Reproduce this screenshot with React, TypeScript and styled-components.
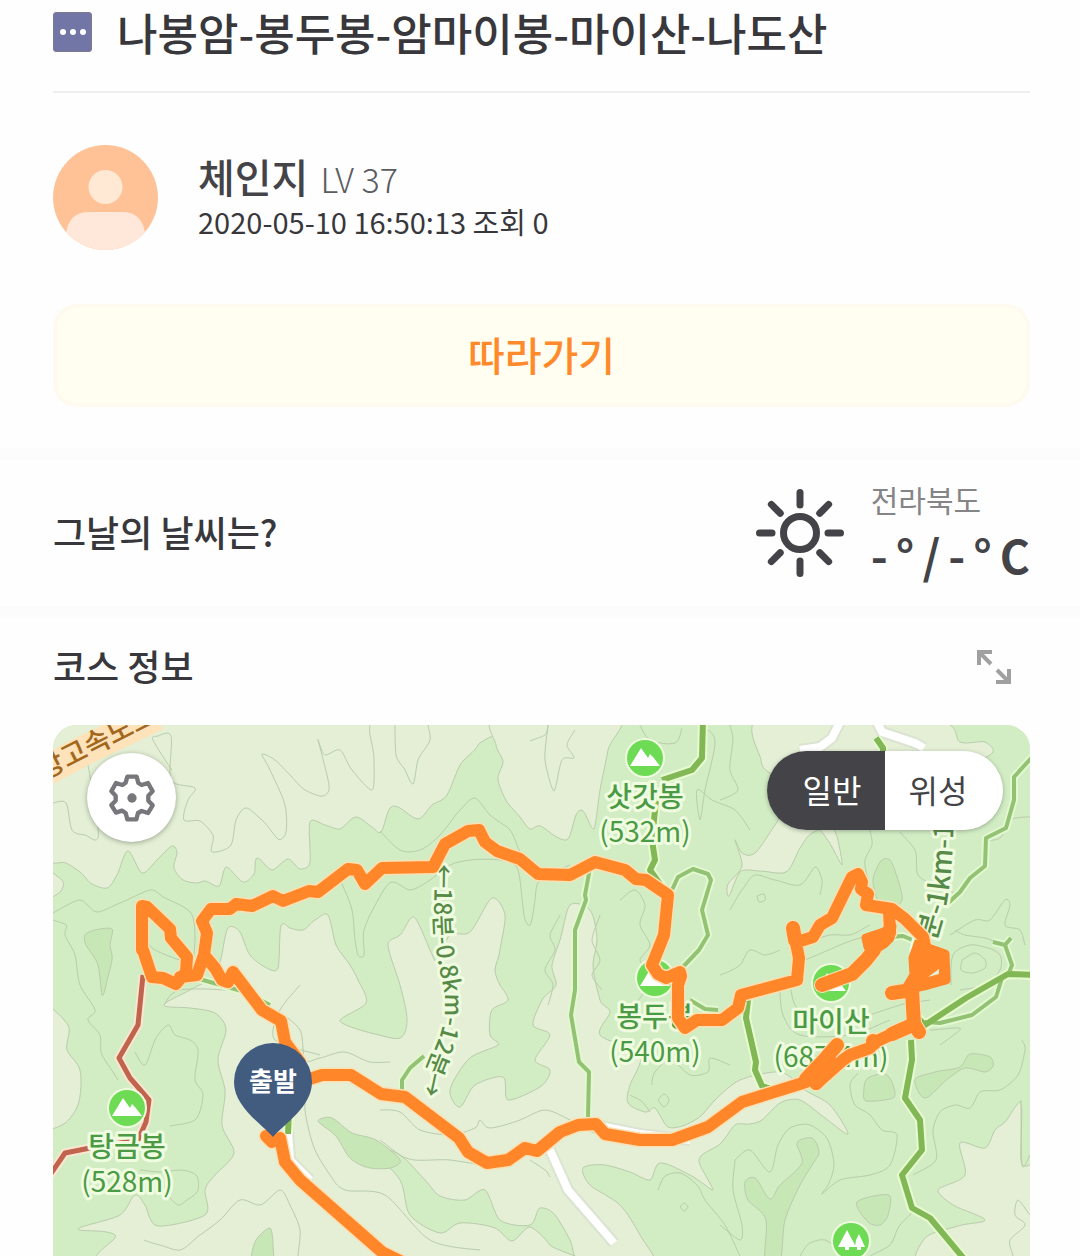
import React, { useState } from "react";
import styled, { createGlobalStyle } from "styled-components";

const GlobalStyle = createGlobalStyle`
  *, *::before, *::after { box-sizing: border-box; }
  body {
    margin: 0;
    background: #fefefe;
    color: #38383c;
    font-family: "Noto Sans CJK KR", "Noto Sans", sans-serif;
  }
  button { font: inherit; border: 0; padding: 0; cursor: pointer; }
  h1, h2, p { margin: 0; }
`;

const Page = styled.main`
  overflow: hidden;
`;

const Section = styled.section`
  padding: 0 50px 0 53px;
`;

const Band = styled.hr`
  height: 12px;
  margin: 0;
  border: 0;
  background: #fcfcfc;
`;

const PostHeader = styled.header`
  display: flex;
  align-items: center;
  gap: 25px;
  padding-bottom: 27px;
  border-bottom: 2px solid #efefef;
`;

const CategoryBadge = styled.span`
  display: flex;
  align-items: center;
  justify-content: center;
  gap: 4px;
  flex: none;
  width: 39px;
  height: 40px;
  border: 1px solid #7b7a90;
  border-radius: 3px;
  background: #7276a6;
`;

const BadgeDot = styled.i`
  width: 6px;
  height: 6px;
  border-radius: 50%;
  background: #fff;
`;

const Title = styled.h1`
  font-size: 44px;
  line-height: 64px;
  font-weight: 500;
`;

const Profile = styled.div`
  display: flex;
  align-items: center;
  gap: 40px;
  padding: 52px 0 54px;
`;

const Avatar = styled.svg`
  flex: none;
  width: 105px;
  height: 105px;
`;

const NameLine = styled.p`
  display: flex;
  align-items: baseline;
  gap: 12px;
  line-height: 48px;
`;

const UserName = styled.strong`
  font-size: 40px;
  font-weight: 500;
  color: #444448;
`;

const Level = styled.span`
  font-size: 34px;
  font-weight: 300;
  color: #5c5c60;
`;

const Meta = styled.p`
  padding-bottom: 4px;
  font-size: 29px;
  line-height: 36px;
`;

const FollowButton = styled.button`
  display: block;
  width: 100%;
  height: 103px;
  margin-bottom: 41px;
  padding-bottom: 4px;
  border: 4px solid #fffaef;
  border-radius: 24px;
  background: #fffef1;
  color: #ff8a2b;
  font-size: 40px;
  font-weight: 500;
`;

const WeatherRow = styled.div`
  display: flex;
  align-items: center;
  justify-content: space-between;
  height: 145px;
`;

const SectionTitle = styled.h2`
  padding-bottom: 4px;
  font-size: 36px;
  line-height: 52px;
  font-weight: 500;
`;

const Weather = styled.div`
  display: flex;
  align-items: center;
  gap: 26px;
`;

const SunIcon = styled.svg`
  width: 90px;
  height: 90px;
`;

const WeatherText = styled.div`
  padding-bottom: 8px;
`;

const Region = styled.p`
  font-size: 30px;
  line-height: 50px;
  color: #858588;
`;

const Temperature = styled.p`
  display: flex;
  gap: 8px;
  font-size: 46px;
  line-height: 60px;
  font-weight: 700;
  color: #444448;
  white-space: nowrap;
`;

const CourseHeader = styled.div`
  display: flex;
  align-items: center;
  justify-content: space-between;
  height: 100px;
  margin-bottom: 8px;
  padding-right: 16px;
`;

const ExpandButton = styled.button`
  display: flex;
  background: none;
  color: #a0a0a0;
`;

const MapFrame = styled.div`
  position: relative;
  overflow: hidden;
  aspect-ratio: 977 / 531;
  border-radius: 24px 24px 0 0;
  background: #d2ecc4;
`;

const MapDrawing = styled.svg`
  display: block;
  width: 100%;
  height: 100%;
  font-family: "Noto Sans CJK KR", "Noto Sans", sans-serif;
`;

const SettingsButton = styled.button`
  position: absolute;
  top: 28px;
  left: 34px;
  display: flex;
  align-items: center;
  justify-content: center;
  width: 89px;
  height: 89px;
  border-radius: 50%;
  background: #fff;
  box-shadow: 0 1px 5px rgba(60, 70, 60, 0.45);
`;

const MapToggle = styled.div`
  position: absolute;
  top: 26px;
  right: 27px;
  display: flex;
  overflow: hidden;
  border-radius: 40px;
  box-shadow: 0 1px 4px rgba(60, 70, 60, 0.4);
`;

const ToggleButton = styled.button<{ $active: boolean; $side: "left" | "right" }>`
  width: 118px;
  height: 79px;
  padding: ${(p) => (p.$side === "left" ? "0 0 4px 12px" : "0 12px 4px 0")};
  background: ${(p) => (p.$active ? "#444448" : "#fff")};
  color: ${(p) => (p.$active ? "#fff" : "#444448")};
  font-size: 32px;
`;

type Pt = [number, number];

const parse = (s: string): Pt[] =>
  s.trim().split(/\s+/).map((p) => p.split(",").map(Number) as Pt);

/* Catmull-Rom curve through the points, so that contour lines look surveyed. */
const curve = (s: string, closed = false) => {
  const p = parse(s);
  const n = p.length;
  const at = (i: number) => (closed ? p[(i + n) % n] : p[Math.max(0, Math.min(n - 1, i))]);
  let d = `M${p[0]}`;
  for (let i = 0; i < (closed ? n : n - 1); i++) {
    const [a, b, c, e] = [at(i - 1), at(i), at(i + 1), at(i + 2)];
    const c1 = [b[0] + (c[0] - a[0]) / 7, b[1] + (c[1] - a[1]) / 7].map(Math.round);
    const c2 = [c[0] - (e[0] - b[0]) / 7, c[1] - (e[1] - b[1]) / 7].map(Math.round);
    d += `C${c1} ${c2} ${c}`;
  }
  return closed ? d + "Z" : d;
};

const lowland = [
  "40,715 40,850 66,863 80,872 92,884 107,888 117,875 128,851 142,873 157,860 172,846 177,853 174,868 183,880 197,883 205,881 219,886 226,867 243,882 254,874 257,858 272,870 288,859 300,869 310,862 310,822 325,825 340,829 356,817 372,827 381,832 390,808 400,808 418,819 432,805 447,795 460,765 478,745 481,715",
  "497,715 496,745 503,762 498,780 507,802 520,817 530,829 540,826 555,836 568,839 576,815 583,811 594,829 600,790 608,750 617,715",
  "764,715 761,760 770,773 800,785 860,790 930,780 990,755 985,742 960,742 935,720",
  "735,840 742,853 755,853 775,825 790,805 815,825 829,842 842,865 839,845 832,828 812,833 800,848 786,872 760,871 740,872 729,896 728,884 742,866",
  "164,1005 190,990 215,975 221,958 228,928 240,932 250,955 265,967 278,968 281,926 290,928 303,930 315,920 328,915 336,945 350,965 358,980 366,1003 340,1021 375,1034 400,1038 407,1020 400,985 388,945 400,935 414,917 430,950 438,962 450,935 470,932 492,898 505,915 500,950 495,970 500,985 508,1000 492,1010 490,1035 498,1045 470,1058 450,1090 460,1107 475,1085 503,1077 508,1100 540,1087 550,1070 535,1060 550,1035 533,1025 542,1000 556,985 552,965 560,940 570,905 590,910 597,940 593,965 600,1000 610,1012 600,1035 640,1055 630,1085 628,1103 645,1112 655,1108 668,1127 685,1125 702,1115 715,1100 740,1080 780,1072 805,1090 830,1105 848,1134 825,1118 800,1100 780,1103 762,1120 750,1124 735,1125 720,1144 702,1155 700,1165 713,1190 690,1175 660,1163 650,1180 630,1172 605,1165 583,1168 590,1185 620,1205 640,1235 655,1270 585,1270 570,1240 555,1215 540,1208 530,1225 500,1220 485,1190 465,1200 440,1196 425,1180 400,1155 370,1145 400,1180 410,1215 440,1233 460,1223 495,1228 512,1241 530,1227 550,1245 560,1270 125,1270 115,1235 78,1229 120,1215 135,1195 145,1205 158,1226 205,1215 205,1190 215,1175 234,1153 222,1125 225,1090 218,1060 226,1030 215,1013 190,1008",
  "40,1010 68,1025 67,1050 80,1070 78,1105 62,1125 40,1120",
  "1021,1103 1005,1122 995,1130 985,1148 960,1143 965,1175 938,1190 955,1206 985,1220 958,1226 925,1238 923,1270 1045,1270 1045,1150 1030,1165 1021,1160",
  "40,868 62,880 60,892 40,900",
];

const highland = [
  "85,935 95,930 112,929 110,945 112,960 106,985 102,995 98,965 86,945",
  "873,880 880,862 890,860 898,880 902,900 893,907 878,900",
  "864,1088 868,1078 885,1074 893,1085 893,1098 866,1101",
  "318,1121 332,1118 352,1133 376,1140 400,1160 390,1168 370,1168 350,1158 335,1135",
  "915,1080 935,1072 960,1067 970,1054 990,1057 993,1066 985,1072 965,1068 950,1077 925,1098",
  "745,1182 755,1178 770,1199 780,1185 802,1163 797,1143 812,1138 819,1152 812,1165 800,1185 785,1220 780,1262 765,1262 766,1220 748,1200",
  "857,1202 889,1195 888,1215 880,1225 868,1222",
  "252,1262 256,1240 270,1228 273,1245 272,1262",
];

const contours = [
  "53,803 66,803 72,830 85,835 96,840 98,827 88,765 82,750",
  "172,770 153,740 158,736 171,736 171,780 195,788 188,800 184,820 200,821 213,835 212,852 231,845 236,820 246,808 262,820 278,839 286,832 285,805 270,770 262,754 275,760 290,775 305,790 323,796 329,785 318,740 325,755 340,750 352,770 372,790 374,760 370,735 370,725",
  "53,913 80,900 97,912 120,903 150,890 165,898 191,913 195,940 193,965",
  "53,920 66,925 65,935 75,955 80,985 95,1010 88,1020 100,1035 102,1055 118,1080",
  "146,940 155,950 180,960",
  "164,1005 180,990 240,992 275,1010 300,1030 305,1060 320,1058 345,1052 370,1062 390,1062",
  "380,831 400,850 420,850 440,835 460,810 475,798 490,815 510,830 520,852 530,870",
  "340,880 352,910 355,940 358,955 364,955 364,930 378,900 392,882 410,890 430,880 450,865 470,860 500,860 515,865 520,880 524,915 530,925 535,900 540,880 570,865",
  "395,725 396,755 405,770 413,784 418,760 430,740 428,725",
  "530,741 545,735 548,725 545,760 554,791 562,760 574,758 567,745 575,730",
  "620,900 635,890 645,905 640,925 650,945 640,960 650,975 642,995 630,1010",
  "700,725 715,740 705,790 700,820 697,790 712,800 735,810 750,830",
  "730,725 733,740 730,770 738,790 720,800",
  "640,725 650,740 675,743 682,728",
  "870,830 872,845 865,860 868,880 870,895",
  "900,832 915,850 918,875 935,885 960,895",
  "1030,817 1010,820 1000,838 985,840",
  "950,935 975,920 990,920 1005,900 1010,905 1005,925 1020,930 1025,945",
  "955,930 965,935 985,938 1000,945 1010,960",
  "962,960 975,953 985,960 985,968 972,973 961,970 962,960",
  "951,985 953,955 970,945 988,948 1000,955 1000,970 985,985 960,990",
  "757,896 764,894 765,900 759,902 757,896",
  "720,975 740,965 750,950 765,955 780,950",
  "730,910 742,890 755,875 775,880 800,885 815,867 822,880 820,895",
  "800,945 830,935 850,935 870,925",
  "805,960 840,945 870,935",
  "790,985 795,1005 810,1020 830,1025 860,1018 900,1005 930,1000",
  "780,985 783,1015 800,1035 850,1035 890,1020",
  "560,915 550,935 555,950 545,970 553,985 548,1005",
  "600,915 592,940 600,960 592,975 602,990",
  "630,1095 640,1100 650,1112",
  "658,1100 664,1094 669,1100 664,1107 658,1100",
  "652,1085 655,1072 670,1060 690,1075 708,1072 710,1058 730,1065",
  "380,1110 400,1112 420,1130 450,1135 475,1128 480,1120 490,1128 520,1120 545,1110 570,1120 600,1135 660,1145",
  "380,1140 400,1155 415,1160 450,1160 480,1165",
  "530,1160 545,1170 550,1177",
  "658,1190 665,1176 680,1173 697,1185 705,1200 725,1225 740,1256",
  "680,1207 684,1203 688,1207 684,1211 680,1207",
  "295,1060 307,1080 305,1110 315,1150 330,1175 345,1190 385,1195 430,1240 480,1250",
  "140,1170 160,1172 180,1170 196,1175 198,1190 187,1200 178,1205 168,1195 165,1185",
  "144,1240 160,1245 180,1250 200,1235 220,1220 240,1200 260,1205 280,1190 290,1205 300,1230 298,1256",
  "135,1052 145,1065 155,1040 168,1025 175,1035 190,1040 198,1050 195,1080 203,1095 195,1120 170,1126",
  "300,985 280,1010 275,1040 320,1055",
  "940,1045 960,1030 955,1028 930,1030",
  "735,1160 750,1150 770,1172 778,1145 790,1128 810,1125 828,1140 834,1165 828,1185 822,1194 840,1180 870,1175 890,1165 897,1135 882,1130 870,1115 855,1105 850,1085 858,1073",
  "913,1175 936,1160 933,1130 940,1112 955,1105 970,1108 980,1092 1000,1090 1018,1075 1025,1050 1022,1040",
  "720,1225 740,1240 742,1225 733,1190 735,1160",
  "870,1256 890,1245 900,1225 915,1210",
  "1021,1100 1022,1165 1030,1155",
  "1030,1215 1018,1200 1015,1215 1025,1225 1010,1240 1013,1256",
  "800,1256 810,1243 825,1240 840,1250",
];

type RoadKind = "trail" | "path" | "fire" | "street";
const roadStyle: Record<RoadKind, { color: string; width: number; casing: string }> = {
  trail: { color: "#82b756", width: 6, casing: "#e8fbd0" },
  path: { color: "#93c274", width: 4, casing: "#e2f8cf" },
  fire: { color: "#c1644e", width: 5, casing: "#fbe6d0" },
  street: { color: "#ffffff", width: 8, casing: "#dbe4d2" },
};

const roads: [RoadKind, string][] = [
  ["street", "800,750 820,747 832,738 842,718"],
  ["street", "875,718 882,732 915,743 924,748"],
  ["street", "288,1130 290,1160 310,1180"],
  ["street", "550,1150 568,1190 614,1243"],
  ["street", "595,1125 640,1134 690,1140"],
  ["path", "590,868 585,895 586,900 575,930 575,990 571,1015 579,1062 589,1072 588,1118"],
  ["path", "402,1095 402,1080 410,1068 424,1056"],
  ["path", "672,890 678,877 693,869 708,874 711,880 702,910 708,935 699,950 680,970"],
  ["trail", "703,718 702,758 692,770 662,780"],
  ["trail", "657,790 652,840 655,860 650,870 668,895"],
  ["path", "690,1000 705,1009 718,1010"],
  ["trail", "748,1000 746,1018 756,1062 755,1070 762,1086 775,1090"],
  ["path", "1034,755 1014,777 1014,800 1006,828 986,838 985,866 970,878 960,892 945,906"],
  ["path", "890,937 903,936 922,944"],
  ["path", "993,942 1005,945 1012,965 1009,973 1034,975"],
  ["path", "1005,945 1011,938"],
  ["path", "1002,978 996,997 972,1015 940,1023 925,1022"],
  ["trail", "1034,975 1008,974 966,998 925,1025 918,1018"],
  ["trail", "911,1040 912,1060 905,1098 920,1120 922,1150 902,1175 912,1208 930,1218 965,1260"],
  ["trail", "876,738 883,748 883,760"],
  ["fire", "143,975 138,1025 119,1058 130,1078 149,1100 146,1122 138,1140 90,1148 65,1153 48,1178"],
  ["path", "196,978 245,992 270,1005"],
  ["trail", "289,1110 288,1134"],
];

const toPath = (parts: string[]) =>
  parts.map((s) => `M${s.trim().split(/\s+/).join("L")}`).join("");

const track = toPath([
  "142,950 142,906 147,907 170,929 171,938 187,957 186,972 176,984 163,978 152,977 143,950",
  "180,977 197,975 204,955 207,933 202,921 211,909 230,909 236,904 252,906 273,896 283,901 309,891 318,892 348,869 357,870 365,884 382,868 433,867 445,844 468,831 479,830 485,842 497,851 520,859 538,874 570,875 595,862 625,870 636,879 646,880 668,895 664,935 652,965 658,974 666,978 680,972 681,976 678,985 678,1018 685,1028 697,1020 722,1020 738,1008 741,995 797,980 799,958 795,938",
  "797,942 813,937 820,925 832,918 852,877 858,874 862,882 861,889 868,894 866,905 892,909 905,919 923,937 926,950",
  "889,911 890,933",
  "890,1035 875,1042 870,1048 850,1055 843,1060 816,1084",
  "806,1082 742,1102 708,1127 672,1140 640,1140 605,1134 596,1124 578,1125 560,1132 537,1151 525,1148 508,1160 487,1163 468,1152 459,1138 405,1097 381,1094 351,1075 322,1075 300,1082",
  "204,955 215,968 222,980 228,982 233,972 262,1010 281,1021 285,1042 300,1062",
  "266,1136 272,1142 280,1138 285,1162 300,1180 382,1252 410,1266",
]);

/* Stretches that were walked back and forth: the recorded line is wider there. */
const repeatedTrack = toPath([
  "793,928 795,940",
  "874,950 866,960 852,974 838,979 822,985",
  "837,1045 824,1060 806,1079",
  "833,1064 816,1083",
  "892,993 905,991 912,988 913,1008 914,1024 919,1032",
  "910,1026 892,1034",
  "873,1041 874,1043",
]);

const denseTrack = [
  "866,938 884,932 892,926 890,938 884,944 876,949 868,947",
  "918,944 928,948 945,954 946,980 928,985 905,990 914,975 913,958",
];

const LabelText = styled.text`
  fill: #4b9a45;
  stroke: #effce0;
  stroke-width: 6px;
  stroke-linejoin: round;
  paint-order: stroke;
  font-size: 28px;
  text-anchor: middle;
`;

const TrailText = styled.text`
  fill: #578a48;
  stroke: #effce0;
  stroke-width: 6px;
  stroke-linejoin: round;
  paint-order: stroke;
  font-size: ${(p: { $size: number }) => p.$size}px;
  font-weight: 500;
`;

const HighwayText = styled.text`
  fill: #a2671c;
  font-size: 28px;
  font-weight: 500;
`;

const PinText = styled.text`
  fill: #fff;
  font-size: 26px;
  font-weight: 700;
  text-anchor: middle;
`;

function Peak({ x, y, name, height }: { x: number; y: number; name: string; height: string }) {
  return (
    <g>
      <circle cx={x} cy={y} r="20" fill="#effce0" />
      <circle cx={x} cy={y} r="18" fill="#6ddb53" />
      <path
        d={`M${x - 15} ${y + 8}L${x - 4} ${y - 10}L${x + 3} ${y}L${x + 5} ${y - 4}L${x + 8} ${y - 1}L${x + 15} ${y + 8}Z`}
        fill="#fff"
      />
      <LabelText fontWeight="500">
        <tspan x={x} y={y + 49}>{name}</tspan>
        <tspan x={x} y={y + 84} fontWeight="400">{height}</tspan>
      </LabelText>
    </g>
  );
}

function CourseMap() {
  return (
    <MapDrawing viewBox="53 725 977 531" preserveAspectRatio="xMidYMid slice" role="img" aria-label="코스 지도">
      <rect x="53" y="725" width="977" height="531" fill="#d2ecc4" />
      <g stroke="#b9ccab" strokeWidth="1">
        <g fill="#e4efd5">
          {lowland.map((s) => <path key={s} d={curve(s, true)} />)}
        </g>
        <g fill="#c8e7b6">
          {highland.map((s) => <path key={s} d={curve(s, true)} />)}
        </g>
        <g fill="none">
          {contours.map((s) => <path key={s} d={curve(s)} />)}
        </g>
      </g>

      <path d="M40 774L85 750L156 716" fill="none" stroke="#fde2ba" strokeWidth="30" />
      <HighwayText transform="translate(44 780) rotate(-27)">항고속도로</HighwayText>

      <g fill="none" strokeLinejoin="round">
        {roads.map(([kind, s]) => (
          <polyline key={s} points={s} stroke={roadStyle[kind].casing} strokeWidth={roadStyle[kind].width + 4} />
        ))}
        {roads.map(([kind, s]) => (
          <polyline key={s} points={s} stroke={roadStyle[kind].color} strokeWidth={roadStyle[kind].width} />
        ))}
      </g>

      <path id="west-trail" d="M435 864L434 910Q434 950 443 985Q448 1010 440 1035L428 1065L416 1120" fill="none" />
      <path id="east-trail" d="M932 957Q938 930 946 907Q954 870 954 780" fill="none" />
      <TrailText $size={24}><textPath href="#west-trail">←18분-0.8km-12분→</textPath></TrailText>
      <TrailText $size={28}><textPath href="#east-trail">7분-1km-1</textPath></TrailText>

      <Peak x={645} y={758} name="삿갓봉" height="(532m)" />
      <Peak x={655} y={978} name="봉두봉" height="(540m)" />
      <Peak x={831} y={983} name="마이산" height="(687.4m)" />
      <Peak x={127} y={1108} name="탕금봉" height="(528m)" />

      <g>
        <circle cx="851" cy="1241" r="20" fill="#effce0" />
        <circle cx="851" cy="1241" r="18" fill="#6ddb53" />
        <path d="M847 1230L856 1247H849V1250H845V1247H838ZM859 1234L865 1247H861V1250H857V1247H855L856 1240Z" fill="#fff" />
      </g>

      <g fill="none" strokeLinejoin="round" strokeLinecap="round">
        <path d={track} stroke="#fbe0b4" strokeWidth="15" />
        <path d={repeatedTrack} stroke="#fbe0b4" strokeWidth="16" />
        <path d={track} stroke="#ff8729" strokeWidth="12" />
        <path d={repeatedTrack} stroke="#ff8729" strokeWidth="14" />
      </g>
      <g fill="#ff8729" stroke="#ff8729" strokeWidth="9" strokeLinejoin="round">
        {denseTrack.map((s) => <polygon key={s} points={s} />)}
      </g>
      <path d="M928 977L939 969V974Z" fill="#e4efd5" />

      <path d="M273 1137C262 1124 234 1107 234 1082A39 39 0 0 1 312 1082C312 1107 284 1124 273 1137Z" fill="#425c80" />
      <PinText x="273" y="1091">출발</PinText>
    </MapDrawing>
  );
}

const rays = [0, 45, 90, 135, 180, 225, 270, 315];

export default function App() {
  const [mode, setMode] = useState<"normal" | "satellite">("normal");
  return (
    <Page>
      <GlobalStyle />
      <Section>
        <PostHeader>
          <CategoryBadge><BadgeDot /><BadgeDot /><BadgeDot /></CategoryBadge>
          <Title>나봉암-봉두봉-암마이봉-마이산-나도산</Title>
        </PostHeader>
        <Profile>
          <Avatar viewBox="0 0 105 105" aria-hidden="true">
            <clipPath id="avatar-clip"><circle cx="52.5" cy="52.5" r="52.5" /></clipPath>
            <g clipPath="url(#avatar-clip)">
              <rect width="105" height="105" fill="#ffc297" />
              <circle cx="52.5" cy="42" r="17" fill="#ffe8d4" />
              <path d="M13 105V88Q16 67 36 67H69Q89 67 92 88V105Z" fill="#ffe8d9" />
            </g>
          </Avatar>
          <div>
            <NameLine><UserName>체인지</UserName><Level>LV 37</Level></NameLine>
            <Meta>2020-05-10 16:50:13 조회 0</Meta>
          </div>
        </Profile>
        <FollowButton type="button">따라가기</FollowButton>
      </Section>
      <Band />
      <Section>
        <WeatherRow>
          <SectionTitle>그날의 날씨는?</SectionTitle>
          <Weather>
            <SunIcon viewBox="-45 -45 90 90" fill="none" stroke="#444448" strokeWidth="7" strokeLinecap="round" aria-hidden="true">
              <circle r="16.5" />
              {rays.map((a) => <line key={a} x1="28" x2="40.5" y1="0" y2="0" transform={`rotate(${a})`} />)}
            </SunIcon>
            <WeatherText>
              <Region>전라북도</Region>
              <Temperature>
                <span>-</span><span>°</span><span>/</span><span>-</span><span>°</span><span>C</span>
              </Temperature>
            </WeatherText>
          </Weather>
        </WeatherRow>
      </Section>
      <Band />
      <Section>
        <CourseHeader>
          <SectionTitle>코스 정보</SectionTitle>
          <ExpandButton type="button" aria-label="지도 확대">
            <svg width="40" height="40" viewBox="0 0 40 40" fill="none" stroke="currentColor" strokeWidth="4">
              <path d="M18 5H5V18M5 5L17 17M35 22V35H22M35 35L23 23" />
            </svg>
          </ExpandButton>
        </CourseHeader>
        <MapFrame>
          <CourseMap />
          <SettingsButton type="button" aria-label="지도 설정">
            <svg width="48" height="48" viewBox="-72 -72 144 144" fill="none" stroke="#77777b" strokeWidth="13" strokeLinejoin="round">
              <path d="M-14 -64H14L19 -45L29 -39L48 -45L62 -20L49 -7V8L62 22L48 45L29 39L18 45L13 64H-14L-19 45L-30 38L-48 44L-62 21L-49 8V-7L-62 -20L-48 -45L-29 -39L-19 -46Z" />
              <circle r="14" fill="#77777b" stroke="none" />
            </svg>
          </SettingsButton>
          <MapToggle role="group" aria-label="지도 종류">
            <ToggleButton type="button" $side="left" $active={mode === "normal"} aria-pressed={mode === "normal"} onClick={() => setMode("normal")}>
              일반
            </ToggleButton>
            <ToggleButton type="button" $side="right" $active={mode === "satellite"} aria-pressed={mode === "satellite"} onClick={() => setMode("satellite")}>
              위성
            </ToggleButton>
          </MapToggle>
        </MapFrame>
      </Section>
    </Page>
  );
}
